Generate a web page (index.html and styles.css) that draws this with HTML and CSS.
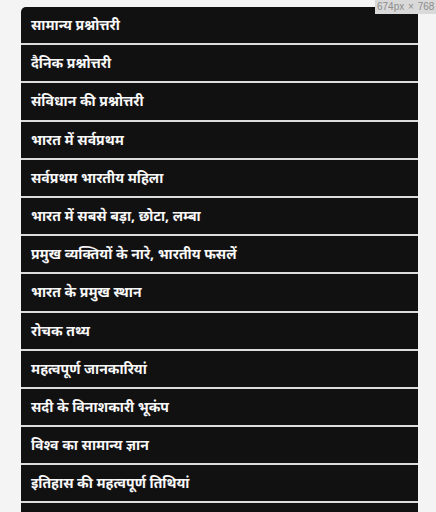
FILE: index.html
```html
<!DOCTYPE html>
<html lang="hi">
<head>
  <meta charset="UTF-8">
  <meta name="viewport" content="width=device-width, initial-scale=1.0">
  <title>सामान्य ज्ञान</title>
  <link rel="stylesheet" href="styles.css">
</head>
<body>
  <div class="size-badge">674px × 768</div>
  <ul class="menu">
    <li>सामान्य प्रश्नोत्तरी</li>
    <li>दैनिक प्रश्नोत्तरी</li>
    <li>संविधान की प्रश्नोत्तरी</li>
    <li>भारत में सर्वप्रथम</li>
    <li>सर्वप्रथम भारतीय महिला</li>
    <li>भारत में सबसे बड़ा, छोटा, लम्बा</li>
    <li>प्रमुख व्यक्तियों के नारे, भारतीय फसलें</li>
    <li>भारत के प्रमुख स्थान</li>
    <li>रोचक तथ्य</li>
    <li>महत्वपूर्ण जानकारियां</li>
    <li>सदी के विनाशकारी भूकंप</li>
    <li>विश्व का सामान्य ज्ञान</li>
    <li>इतिहास की महत्वपूर्ण तिथियां</li>
    <li></li>
  </ul>
</body>
</html>
```

FILE: styles.css
```css
body {
  margin: 0;
  padding: 7px 18px 0 21px;
  background-color: #f4f4f4;
  font-family: 'Noto Sans', 'DejaVu Sans', sans-serif;
}
.menu {
  list-style: none;
  margin: 0;
  padding: 0;
  border-radius: 5px 5px 0 0;
  overflow: hidden;
}
.menu li {
  height: 36.2px;
  line-height: 36px;
  padding: 0 10px;
  background-color: #121112;
  color: #f8f8f8;
  font-size: 14px;
  font-weight: bold;
  white-space: nowrap;
  border-bottom: 2px solid #dcdcdc;
}
.size-badge {
  position: absolute;
  top: 0;
  left: 375px;
  right: 0;
  height: 14px;
  line-height: 14px;
  padding: 0 2px;
  background-color: #d9d9d9;
  color: #8c8c8c;
  font-family: 'Liberation Sans', sans-serif;
  font-size: 10px;
  word-spacing: 1px;
  white-space: nowrap;
  overflow: hidden;
  z-index: 2;
}
```
